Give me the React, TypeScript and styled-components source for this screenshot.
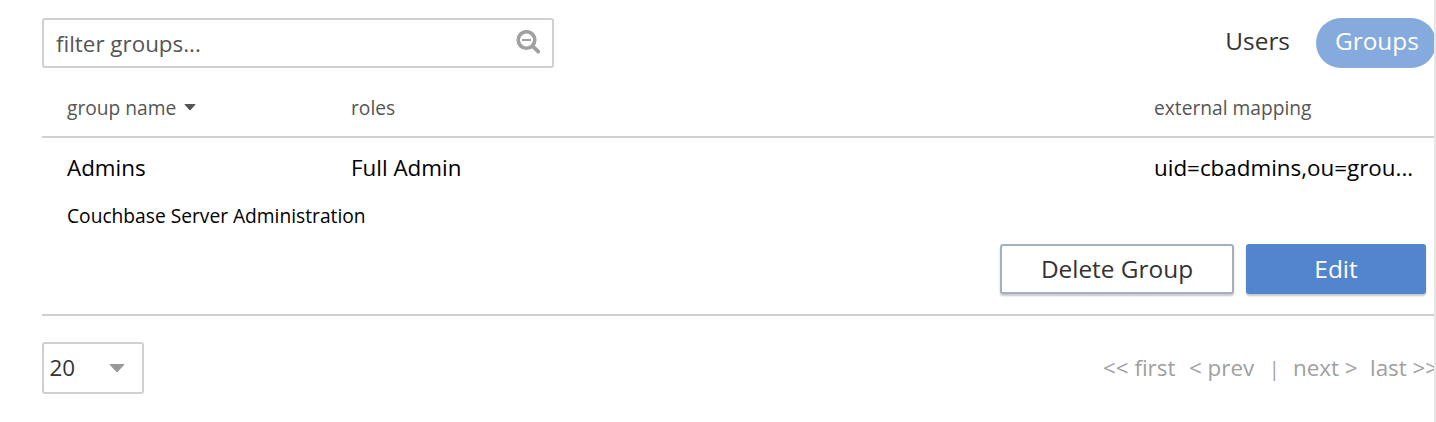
import React from "react";
import styled, { createGlobalStyle } from "styled-components";

const Global = createGlobalStyle`
  *{box-sizing:border-box}
  body{margin:0;background:#fff;font-family:"Open Sans","Noto Sans",sans-serif;color:#000;overflow:hidden}
`;
const Page = styled.main`
  width:1436px;height:422px;padding:18px 0 0 42px;overflow:hidden;
  border-right:2px solid #e6e6e6;display:flex;flex-direction:column;
`;
const Toolbar = styled.header`
  display:flex;justify-content:space-between;height:50px;flex:none;
`;
const Search = styled.label`
  display:flex;align-items:center;justify-content:space-between;
  width:512px;height:50px;padding:0 12px;border:2px solid #d0d0d0;border-radius:3px;
  font-size:22.4px;color:#555;
`;
const Tabs = styled.nav`
  display:flex;margin-right:-2px;
`;
const Tab = styled.a<{ $active?: boolean }>`
  height:50px;line-height:46px;font-size:24.4px;white-space:nowrap;
  padding:${p => (p.$active ? "0 0 0 19px" : "0 26px 0 0")};
  width:${p => (p.$active ? "120px" : "auto")};
  border-radius:25px;color:${p => (p.$active ? "#fff" : "#333")};
  background:${p => (p.$active ? "#85aadd" : "transparent")};
`;
const Row = styled.div`
  display:grid;grid-template-columns:284px 803px 1fr;padding-left:25px;flex:none;white-space:nowrap;
`;
const HeadRow = styled(Row)`
  height:70px;padding-top:10px;border-bottom:2px solid #d0d0d0;align-items:center;font-size:19.2px;color:#555;
`;
const Sort = styled.span`
  display:flex;align-items:center;gap:8px;
`;
const Group = styled.section`
  height:178px;border-bottom:2px solid #d0d0d0;flex:none;
`;
const DataRow = styled(Row)`
  height:60px;padding-bottom:2px;align-items:center;font-size:22.4px;
`;
const Description = styled.p`
  margin:0;padding-left:25px;height:34px;line-height:35px;font-size:19.2px;
`;
const Actions = styled.div`
  display:flex;justify-content:flex-end;gap:12px;padding:12px 8px 0 0;
`;
const Button = styled.button<{ $primary?: boolean }>`
  height:50px;width:${p => (p.$primary ? 180 : 234)}px;padding:0 0 2px;
  font:24.4px "Open Sans",sans-serif;border-radius:3px;
  border:2px solid ${p => (p.$primary ? "#5285ce" : "#a5afbd")};
  background:${p => (p.$primary ? "#5285ce" : "#fff")};
  color:${p => (p.$primary ? "#fff" : "#333")};
  box-shadow:0 2px 2px rgba(0,0,0,.22);
`;
const Footer = styled.footer`
  display:flex;justify-content:space-between;padding-top:26px;
`;
const PageSize = styled.div`
  display:flex;align-items:center;justify-content:space-between;
  width:102px;height:52px;border:2px solid #d0d0d0;border-radius:3px;padding:0 17px 0 5.5px;
  font-size:22.4px;color:#333;
`;
const SizeValue = styled.span`
  padding-bottom:2px;
`;
const Pager = styled.div`
  display:flex;line-height:52px;font-size:22.4px;color:#a0a0a0;white-space:nowrap;width:331px;
`;
const PageLink = styled.span<{ $w: number }>`
  flex:none;width:${p => p.$w}px;
`;
const Divider = styled(PageLink)`
  font-size:19.2px;line-height:54px;
`;

export default function App() {
  return (
    <>
      <Global />
      <Page>
        <Toolbar>
          <Search>
            <span>filter groups...</span>
            <svg width="26" height="26" viewBox="0 0 26 26" fill="none" stroke="#a0a0a0">
              <circle cx="12.5" cy="10" r="8.3" strokeWidth="3.6" />
              <path d="M18.5 16L24.2 21.6" strokeWidth="3.8" strokeLinecap="round" />
              <path d="M8 10h9" strokeWidth="2" />
            </svg>
          </Search>
          <Tabs>
            <Tab>Users</Tab>
            <Tab $active>Groups</Tab>
          </Tabs>
        </Toolbar>
        <HeadRow>
          <Sort>
            group name
            <svg width="12" height="7" viewBox="0 0 12 7"><path d="M1 .5H11L6 6Z" fill="#555" stroke="#555" strokeLinejoin="round" /></svg>
          </Sort>
          <span>roles</span>
          <span>external mapping</span>
        </HeadRow>
        <Group>
          <DataRow>
            <span>Admins</span>
            <span>Full Admin</span>
            <span>uid=cbadmins,ou=grou...</span>
          </DataRow>
          <Description>Couchbase Server Administration</Description>
          <Actions>
            <Button>Delete Group</Button>
            <Button $primary>Edit</Button>
          </Actions>
        </Group>
        <Footer>
          <PageSize>
            <SizeValue>20</SizeValue>
            <svg width="16" height="9" viewBox="0 0 16 9"><path d="M1 .5H15L8 8Z" fill="#999" stroke="#999" strokeLinejoin="round" /></svg>
          </PageSize>
          <Pager>
            <PageLink $w={86}>&lt;&lt; first</PageLink>
            <PageLink $w={80}>&lt; prev</PageLink>
            <Divider $w={24}>|</Divider>
            <PageLink $w={77}>next &gt;</PageLink>
            <PageLink $w={64}>last &gt;&gt;</PageLink>
          </Pager>
        </Footer>
      </Page>
    </>
  );
}
